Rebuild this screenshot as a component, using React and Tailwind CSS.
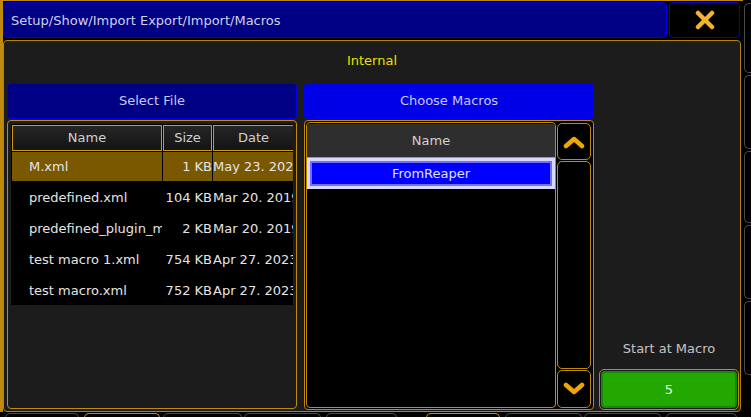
import React from 'react';

const files = [
  { name: 'M.xml', size: '1 KB', date: 'May 23. 2023', selected: true },
  { name: 'predefined.xml', size: '104 KB', date: 'Mar 20. 2019' },
  { name: 'predefined_plugin_macros.xml', size: '2 KB', date: 'Mar 20. 2019' },
  { name: 'test macro 1.xml', size: '754 KB', date: 'Apr 27. 2023' },
  { name: 'test macro.xml', size: '752 KB', date: 'Apr 27. 2023' },
];

const tabs = [
  { w: 'w-[74px] ml-[5px]', on: false },
  { w: 'w-[76px] ml-[5px]', on: true },
  { w: 'w-[79px] ml-[3px]', on: false },
  { w: 'w-[77px] ml-[2px]', on: false },
  { w: 'w-[71px] ml-[5px]', on: false },
  { w: 'w-[74px] ml-[29px]', on: true },
  { w: 'w-[77px] ml-[5px]', on: false },
  { w: 'w-[77px] ml-[2px]', on: false },
  { w: 'w-[71px] ml-[5px]', on: false },
];

function Chevron({ up }) {
  return (
    <svg width="22" height="14" viewBox="0 0 22 14">
      <polyline
        points={up ? '3,11 11,4 19,11' : '3,3 11,10 19,3'}
        fill="none"
        stroke="#f0a800"
        strokeWidth="4.5"
        strokeLinecap="round"
        strokeLinejoin="round"
      />
    </svg>
  );
}

export default function App() {
  return (
    <div className="w-[751px] h-[417px] bg-black overflow-hidden flex flex-col font-['DejaVu_Sans',sans-serif] text-[13px]">
      <div className="flex h-[412px] shrink-0">
        {/* window */}
        <div className="w-[743px] h-full border-t border-l-[3px] border-[#c08a0c] flex flex-col">
          {/* title bar */}
          <div className="flex gap-[2px] h-[36px] mt-[1px] shrink-0">
            <div className="w-[664px] bg-[#000084] border border-[#0000e8] rounded-[4px] flex items-center pl-[7px] pt-[1px] text-[#d0d0e8]">
              Setup/Show/Import Export/Import/Macros
            </div>
            <div className="w-[71px] bg-black border border-[#0000e8] rounded-[4px] flex items-center justify-center">
              <svg width="20" height="20" viewBox="0 0 20 20">
                <path d="M3 3 L17 17 M17 3 L3 17" stroke="#f2b430" strokeWidth="4.5" strokeLinecap="round" />
              </svg>
            </div>
          </div>

          {/* main panel */}
          <div className="mt-[2px] w-[738px] flex-1 bg-[#1c1c1c] border border-[#b5820e] rounded-[4px] flex flex-col">
            <div className="h-[42px] pb-[2px] flex items-center justify-center text-[#e8e000]">Internal</div>

            <div className="flex-1 flex pl-[3px] pb-[1px]">
              {/* select file column */}
              <div className="w-[290px] flex flex-col">
                <div className="h-[36px] bg-[#000084] border border-[#0000e8] rounded-[4px] flex items-center justify-center text-[#c8c8f0]">
                  Select File
                </div>
                <div className="flex-1 mt-[1px] mb-[1px] border border-[#c08a0c] rounded-[4px] p-[3px]">
                  <div className="h-[181px] bg-black overflow-hidden px-[1px] pt-[1px]">
                    <div className="flex gap-[1px] h-[26px] text-[#d0d0d0]">
                      <div className="w-[150px] shrink-0 border border-[#d09a10] bg-gradient-to-b from-[#262626] to-[#141414] flex items-center justify-center">Name</div>
                      <div className="w-[49px] shrink-0 border border-[#d09a10] bg-gradient-to-b from-[#262626] to-[#141414] flex items-center justify-center">Size</div>
                      <div className="w-[81px] shrink-0 border border-[#d09a10] bg-gradient-to-b from-[#262626] to-[#141414] flex items-center justify-center">Date</div>
                    </div>
                    {files.map((f) => (
                      <div key={f.name} className="flex gap-[1px] h-[31px] py-[1px] text-[#e4e4e4] whitespace-nowrap">
                        <div className={`w-[150px] shrink-0 overflow-hidden flex items-center pl-[17px] ${f.selected ? 'bg-[#7a5800]' : ''}`}>{f.name}</div>
                        <div className={`w-[49px] shrink-0 overflow-hidden flex items-center justify-end ${f.selected ? 'bg-[#7a5800]' : ''}`}>{f.size}</div>
                        <div className={`w-[81px] shrink-0 overflow-hidden flex items-center ${f.selected ? 'bg-[#7a5800] mr-[2px]' : ''}`}>{f.date}</div>
                      </div>
                    ))}
                  </div>
                </div>
              </div>

              {/* choose macros column */}
              <div className="w-[290px] ml-[7px] flex flex-col">
                <div className="h-[36px] bg-[#0000e6] border border-[#0000ff] rounded-[4px] flex items-center justify-center text-[#c8c8f8]">
                  Choose Macros
                </div>
                <div className="flex-1 mt-[1px] border border-[#c08a0c] rounded-[4px] p-[1px] flex gap-[1px] bg-black">
                  <div className="w-[250px] border border-[#c08a0c] rounded-[4px] bg-black flex flex-col">
                    <div className="mt-[1px] h-[34px] bg-[#2e2e2e] border-b border-[#d09a10] flex items-center justify-center text-[#d0d0d0]">Name</div>
                    <div className="h-[31px] bg-[#0000ff] border-[3px] border-[#d8d8ff] shadow-[inset_0_0_0_2px_#7070ff] flex items-center justify-center text-[#e0e0ff]">
                      FromReaper
                    </div>
                  </div>
                  <div className="flex-1 flex flex-col gap-[1px] pr-[1px]">
                    <div className="h-[37px] mt-[1px] border border-[#c08a0c] rounded-[5px] flex items-center justify-center">
                      <Chevron up />
                    </div>
                    <div className="flex-1 border border-[#c08a0c] rounded-[5px]" />
                    <div className="h-[38px] border border-[#c08a0c] rounded-[5px] flex items-center justify-center">
                      <Chevron />
                    </div>
                  </div>
                </div>
              </div>

              {/* right column */}
              <div className="flex-1 ml-[5px] mr-[1px] flex flex-col justify-end">
                <div className="text-center text-[#c4c4c4] mb-[11px]">Start at Macro</div>
                <div className="h-[41px] border border-[#c08a0c] rounded-[5px] p-[1px] bg-[#1a1a1a]">
                  <div className="h-full bg-[#22a800] border-2 border-[#18880a] rounded-[4px] flex items-center justify-center text-[#e8ffe8]">
                    5
                  </div>
                </div>
              </div>
            </div>
          </div>
        </div>

        {/* right edge of neighbour panel */}
        <div className="flex-1 flex flex-col gap-[2px] pt-[3px] pl-[1px]">
          <div className="h-[70px] border-l border-y border-[#4a4a4a] rounded-l-[5px]" />
          <div className="h-[74px] border-l border-y border-[#4a4a4a] rounded-l-[5px]" />
          <div className="h-[72px] border-l border-y border-[#4a4a4a] rounded-l-[5px]" />
          <div className="h-[74px] border-l border-y border-[#4a4a4a] rounded-l-[5px]" />
          <div className="h-[74px] border-l border-y border-[#4a4a4a] rounded-l-[5px]" />
        </div>
      </div>

      {/* bottom tabs */}
      <div className="flex-1 flex pt-[1px] overflow-hidden">
        {tabs.map((t, i) => (
          <div
            key={i}
            className={`${t.w} h-[10px] shrink-0 border-t border-x rounded-t-[5px] ${t.on ? 'border-[#c08a0c]' : 'border-[#4a4a4a]'}`}
          />
        ))}
      </div>
    </div>
  );
}
